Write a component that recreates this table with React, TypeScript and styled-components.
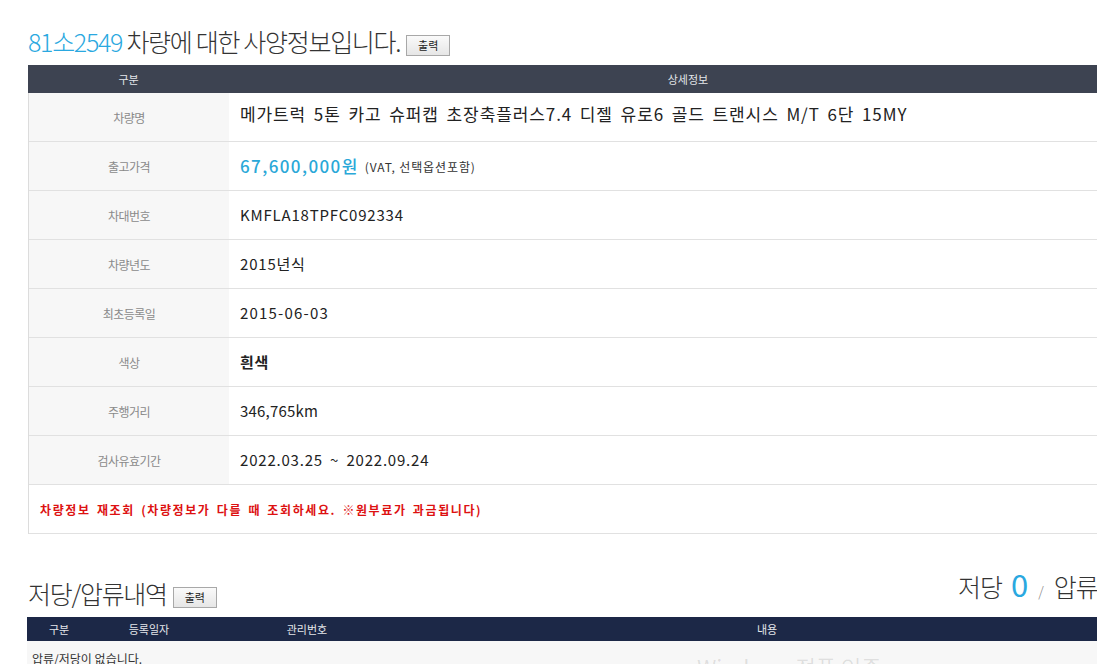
import React from "react";
import styled, { createGlobalStyle } from "styled-components";

const Global = createGlobalStyle`
  html, body { margin: 0; padding: 0; background: #fff; overflow: hidden; }
  body { font-family: "Noto Sans CJK KR", "Noto Sans", sans-serif; color: #333; }
`;

const Page = styled.div`
  width: 1119px;
  padding: 26px 0 0 28px;
  position: relative;
`;

const TitleRow = styled.div<{ $mt?: number }>`
  display: flex;
  align-items: flex-end;
  justify-content: space-between;
  margin-top: ${(p) => p.$mt ?? 0}px;
  margin-bottom: 9px;
`;

const TitleLeft = styled.div`
  display: flex;
  align-items: flex-end;
  gap: 6px;
`;

const Title = styled.h2`
  margin: 0;
  font-size: 25px;
  font-weight: 300;
  letter-spacing: -1.3px;
  line-height: 30px;
  color: #333;
`;

const Blue = styled.span`
  color: #2aa8e0;
`;

const PrintButton = styled.button`
  width: 44px;
  height: 21px;
  padding: 0;
  border: 1px solid #a8a8a8;
  background: linear-gradient(#fafafa, #e6e6e6);
  font-family: "Noto Sans CJK KR", sans-serif;
  font-size: 11px;
  color: #222;
  line-height: 19px;
`;

const Table = styled.div`
  border-left: 1px solid #dcdcdc;
`;

const HeadRow = styled.div<{ $bg: string; $h: number; $cols: string }>`
  display: grid;
  grid-template-columns: ${(p) => p.$cols};
  height: ${(p) => p.$h}px;
  background: ${(p) => p.$bg};
  margin-left: -1px;
`;

const HeadCell = styled.div`
  display: flex;
  align-items: center;
  justify-content: center;
  color: #e4e6ea;
  font-size: 11px;
`;

const Row = styled.div`
  display: grid;
  grid-template-columns: 200px 1fr;
  height: 48px;
  border-bottom: 1px solid #e1e1e1;
`;

const Label = styled.div`
  background: #f7f7f7;
  display: flex;
  align-items: center;
  justify-content: center;
  font-size: 12px;
  color: #8a8a8a;
  letter-spacing: -0.5px;
`;

const Value = styled.div<{ $size?: number; $bold?: boolean; $ls?: number; $lift?: number }>`
  display: flex;
  align-items: center;
  gap: 6px;
  padding: 0 0 ${(p) => p.$lift ?? 2}px 11px;
  font-size: ${(p) => p.$size ?? 15}px;
  font-weight: ${(p) => (p.$bold ? 700 : 400)};
  color: #222;
  letter-spacing: ${(p) => p.$ls ?? 0.8}px;
  word-spacing: 3px;
`;

const Price = styled.span`
  color: #2aa8d8;
  font-size: 17px;
  font-weight: 500;
  letter-spacing: 1.4px;
`;

const Note = styled.span`
  font-size: 12px;
  color: #333;
  padding-top: 3px;
  letter-spacing: 0.9px;
  word-spacing: 0;
`;

const NoticeRow = styled.div`
  height: 48px;
  border-bottom: 1px solid #e1e1e1;
  display: flex;
  align-items: center;
  padding-left: 11px;
  color: #dd1111;
  font-size: 12px;
  font-weight: 700;
  letter-spacing: 1.6px;
  word-spacing: 2px;
`;

const Summary = styled.div`
  display: flex;
  align-items: baseline;
  gap: 9px;
  font-size: 25px;
  font-weight: 300;
  color: #333;
  letter-spacing: -1px;
  margin-bottom: 2px;
  margin-right: 24px;
`;

const Count = styled.span`
  color: #2aa8e0;
  font-size: 31px;
  font-weight: 400;
`;

const Slash = styled.span`
  font-size: 14px;
  color: #888;
  margin: 0 2px;
`;

const EmptyRow = styled.div`
  background: #f7f7f7;
  height: 34px;
  display: flex;
  align-items: center;
  padding-left: 5px;
  font-size: 12px;
  color: #333;
  margin-left: -1px;
`;

const Watermark = styled.div`
  position: absolute;
  left: 697px;
  top: 650px;
  font-size: 22px;
  color: rgba(0, 0, 0, 0.1);
  font-family: "Noto Sans CJK KR", sans-serif;
  pointer-events: none;
`;

type Spec = { label: string; value: string; size?: number; bold?: boolean; ls?: number; lift?: number };

const specs: Spec[] = [
  { label: "차량명", value: "메가트럭 5톤 카고 슈퍼캡 초장축플러스7.4 디젤 유로6 골드 트랜시스 M/T 6단 15MY", size: 17, ls: 0.9, lift: 8 },
  { label: "출고가격", value: "price" },
  { label: "차대번호", value: "KMFLA18TPFC092334" },
  { label: "차량년도", value: "2015년식" },
  { label: "최초등록일", value: "2015-06-03", ls: 1.2 },
  { label: "색상", value: "흰색", bold: true },
  { label: "주행거리", value: "346,765km", ls: 0.2 },
  { label: "검사유효기간", value: "2022.03.25 ~ 2022.09.24" },
];

export default function App() {
  return (
    <>
      <Global />
      <Page>
        <TitleRow>
          <TitleLeft>
            <Title>
              <Blue>81소2549</Blue> 차량에 대한 사양정보입니다.
            </Title>
            <PrintButton>출력</PrintButton>
          </TitleLeft>
        </TitleRow>
        <Table>
          <HeadRow $bg="#3d4351" $h={28} $cols="201px 1fr">
            <HeadCell>구분</HeadCell>
            <HeadCell>상세정보</HeadCell>
          </HeadRow>
          {specs.map((s) => (
            <Row key={s.label}>
              <Label>{s.label}</Label>
              {s.value === "price" ? (
                <Value>
                  <Price>67,600,000원</Price>
                  <Note>(VAT, 선택옵션포함)</Note>
                </Value>
              ) : (
                <Value $size={s.size} $bold={s.bold} $ls={s.ls} $lift={s.lift}>
                  {s.value}
                </Value>
              )}
            </Row>
          ))}
          <NoticeRow>차량정보 재조회 (차량정보가 다를 때 조회하세요. ※원부료가 과금됩니다)</NoticeRow>
        </Table>

        <TitleRow $mt={27}>
          <TitleLeft>
            <Title>저당/압류내역</Title>
            <PrintButton>출력</PrintButton>
          </TitleLeft>
          <Summary>
            <span>저당</span>
            <Count>0</Count>
            <Slash>/</Slash>
            <span>압류</span>
            <Count>0</Count>
          </Summary>
        </TitleRow>
        <HeadRow $bg="#1c2847" $h={24} $cols="64px 116px 200px 720px 1fr">
          <HeadCell>구분</HeadCell>
          <HeadCell>등록일자</HeadCell>
          <HeadCell>관리번호</HeadCell>
          <HeadCell>내용</HeadCell>
          <HeadCell />
        </HeadRow>
        <EmptyRow>압류/저당이 없습니다.</EmptyRow>
        <Watermark>Windows 정품 인증</Watermark>
      </Page>
    </>
  );
}
